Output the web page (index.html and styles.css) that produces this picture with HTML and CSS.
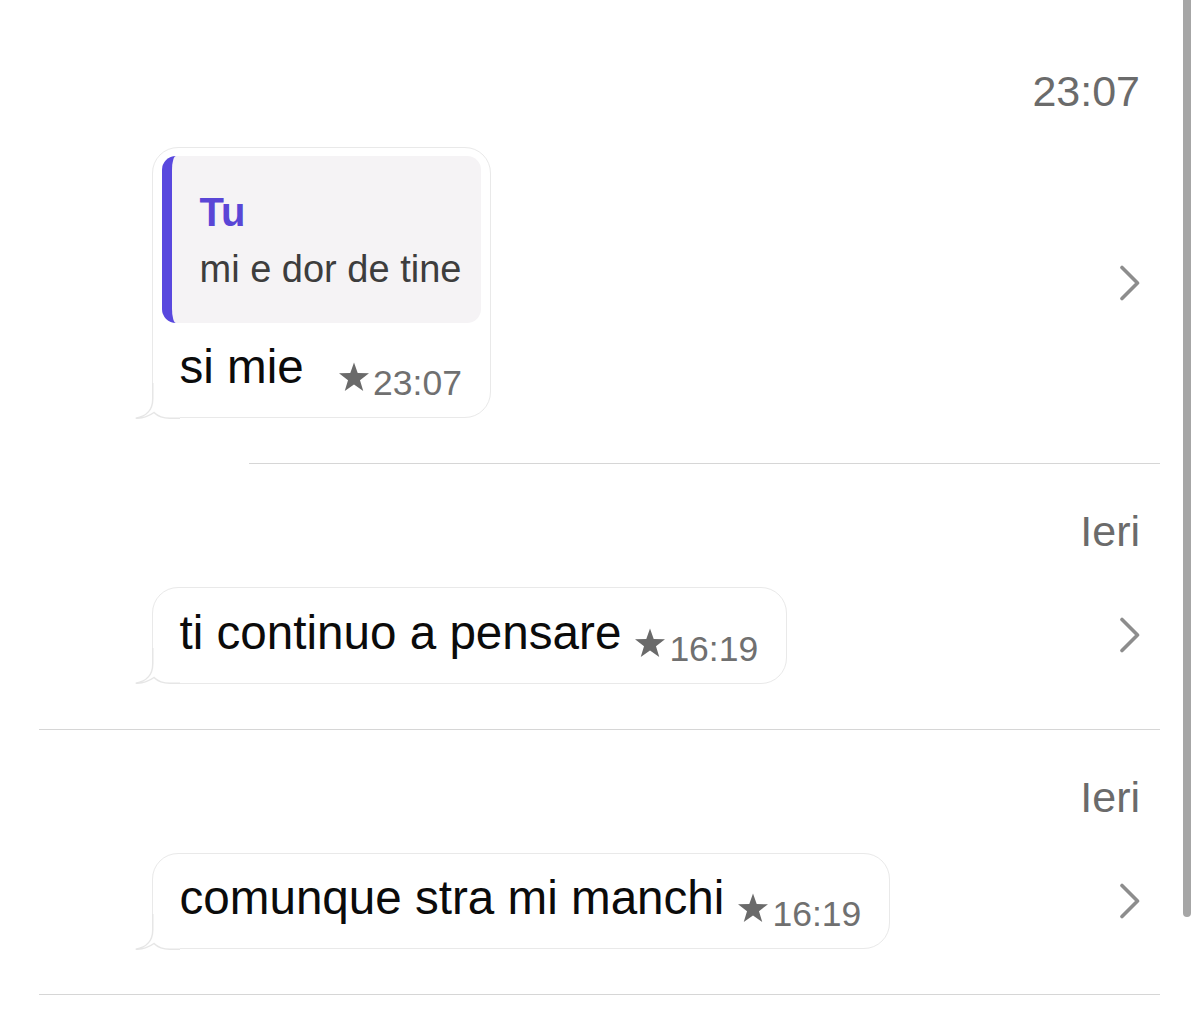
FILE: index.html
```html
<!DOCTYPE html>
<html lang="it">
<head>
<meta charset="utf-8">
<title>Messaggi importanti</title>
<link rel="stylesheet" href="styles.css">
</head>
<body>
<div class="screen">
  <div class="list">
    <div class="item item-first">
      <div class="date">23:07</div>
      <div class="row">
        <div class="bubble">
          <svg class="tail" width="46" height="44" viewBox="0 0 46 44"><path class="tail-fill" d="M18.75 8 L18.75 24 C18.75 35 12 41.5 1.75 43.25 C9 43.5 15 41 20 37.5 C24 41.5 29 43.25 36 43.25 L46 43.25 L46 8 Z"/><path class="tail-line" d="M18.75 8 L18.75 24 C18.75 35 12 41.5 1.75 43.25 C9 43.5 15 41 20 37.5 C24 41.5 29 43.25 36 43.25 L46 43.25"/></svg>
          <div class="quote">
            <div class="quote-name">Tu</div>
            <div class="quote-text">mi e dor de tine</div>
          </div>
          <div class="msg">
            <span class="msg-text">si mie</span>
            <span class="meta"><svg class="star" width="36" height="36" viewBox="0 0 24 24"><path d="M12 2.3 L14.47 9.4 L21.99 9.555 L15.99 14.1 L18.17 21.29 L12 17 L5.83 21.29 L8.01 14.1 L2.01 9.555 L9.53 9.4Z"/></svg><span class="time">23:07</span></span>
          </div>
        </div>
        <svg class="chev" width="22" height="36" viewBox="0 0 22 36"><path d="M3 2.5 L18.5 18 L3 33.5"/></svg>
      </div>
    </div>
    <div class="sep sep-first"></div>

    <div class="item">
      <div class="date">Ieri</div>
      <div class="row">
        <div class="bubble">
          <svg class="tail" width="46" height="44" viewBox="0 0 46 44"><path class="tail-fill" d="M18.75 8 L18.75 24 C18.75 35 12 41.5 1.75 43.25 C9 43.5 15 41 20 37.5 C24 41.5 29 43.25 36 43.25 L46 43.25 L46 8 Z"/><path class="tail-line" d="M18.75 8 L18.75 24 C18.75 35 12 41.5 1.75 43.25 C9 43.5 15 41 20 37.5 C24 41.5 29 43.25 36 43.25 L46 43.25"/></svg>
          <div class="msg">
            <span class="msg-text">ti continuo a pensare</span>
            <span class="meta"><svg class="star" width="36" height="36" viewBox="0 0 24 24"><path d="M12 2.3 L14.47 9.4 L21.99 9.555 L15.99 14.1 L18.17 21.29 L12 17 L5.83 21.29 L8.01 14.1 L2.01 9.555 L9.53 9.4Z"/></svg><span class="time">16:19</span></span>
          </div>
        </div>
        <svg class="chev" width="22" height="36" viewBox="0 0 22 36"><path d="M3 2.5 L18.5 18 L3 33.5"/></svg>
      </div>
    </div>
    <div class="sep"></div>

    <div class="item">
      <div class="date">Ieri</div>
      <div class="row">
        <div class="bubble">
          <svg class="tail" width="46" height="44" viewBox="0 0 46 44"><path class="tail-fill" d="M18.75 8 L18.75 24 C18.75 35 12 41.5 1.75 43.25 C9 43.5 15 41 20 37.5 C24 41.5 29 43.25 36 43.25 L46 43.25 L46 8 Z"/><path class="tail-line" d="M18.75 8 L18.75 24 C18.75 35 12 41.5 1.75 43.25 C9 43.5 15 41 20 37.5 C24 41.5 29 43.25 36 43.25 L46 43.25"/></svg>
          <div class="msg">
            <span class="msg-text">comunque stra mi manchi</span>
            <span class="meta"><svg class="star" width="36" height="36" viewBox="0 0 24 24"><path d="M12 2.3 L14.47 9.4 L21.99 9.555 L15.99 14.1 L18.17 21.29 L12 17 L5.83 21.29 L8.01 14.1 L2.01 9.555 L9.53 9.4Z"/></svg><span class="time">16:19</span></span>
          </div>
        </div>
        <svg class="chev" width="22" height="36" viewBox="0 0 22 36"><path d="M3 2.5 L18.5 18 L3 33.5"/></svg>
      </div>
    </div>
    <div class="sep"></div>
  </div>
  <div class="scrollbar"></div>
</div>
</body>
</html>
```
FILE: styles.css
```css
html, body {
  margin: 0;
  padding: 0;
  background: #ffffff;
}
body {
  font-family: "Liberation Sans", Arial, sans-serif;
  color: #0b0b0b;
}
.screen {
  position: relative;
  width: 1200px;
  height: 1017px;
  overflow: hidden;
}
.list {
  margin-left: 39px;
  width: 1121px;
}
.item {
  padding: 42px 20px 0 0;
}
.item-first {
  padding-top: 66px;
}
.date {
  text-align: right;
  font-size: 43px;
  line-height: 50px;
  color: #6b6b6b;
}
.row {
  display: flex;
  align-items: center;
  justify-content: space-between;
  padding: 31px 0 45px 113px;
}
.bubble {
  position: relative;
  flex: none;
  background: #ffffff;
  border: 1.5px solid #e9e9e9;
  border-radius: 26px;
  padding: 0 0 22px;
}
.tail {
  position: absolute;
  left: -19.5px;
  bottom: -1.5px;
}
.tail-fill {
  fill: #ffffff;
  stroke: none;
}
.tail-line {
  fill: none;
  stroke: #e6e6e6;
  stroke-width: 1.5;
}
.quote {
  position: relative;
  margin: 7.5px 8.5px 0 8.5px;
  background: #f5f3f5;
  border-left: 10px solid #5948de;
  border-radius: 14px;
  padding: 34px 20px 32px 28px;
}
.quote-name {
  font-size: 40px;
  font-weight: bold;
  line-height: 44px;
  color: #5a46d6;
}
.quote-text {
  margin-top: 13px;
  font-size: 38px;
  line-height: 44px;
  color: #3d3d3d;
}
.msg {
  position: relative;
  display: flex;
  align-items: flex-end;
  gap: 11px;
  padding: 16.5px 28px 0 26.5px;
}
.msg-text {
  flex: none;
  font-size: 47.6px;
  line-height: 56px;
  color: #0b0b0b;
}
.meta {
  margin-left: auto;
  display: inline-flex;
  align-items: baseline;
  color: #707070;
}
.star {
  display: block;
  margin: 0 1px -4.5px 0;
  fill: #6a6a6a;
}
.time {
  font-size: 35.5px;
  line-height: 24px;
}
.chev {
  flex: none;
  margin-right: -1px;
}
.chev path {
  fill: none;
  stroke: #8d8d8d;
  stroke-width: 3.6;
  stroke-linecap: round;
  stroke-linejoin: round;
}
.sep {
  height: 1px;
  background: #d6d6d6;
}
.sep-first {
  margin-left: 210px;
}
.scrollbar {
  position: absolute;
  top: 0;
  right: 9px;
  width: 8px;
  height: 917px;
  background: #a6a6a6;
  border-radius: 0 0 4px 4px;
}
```
